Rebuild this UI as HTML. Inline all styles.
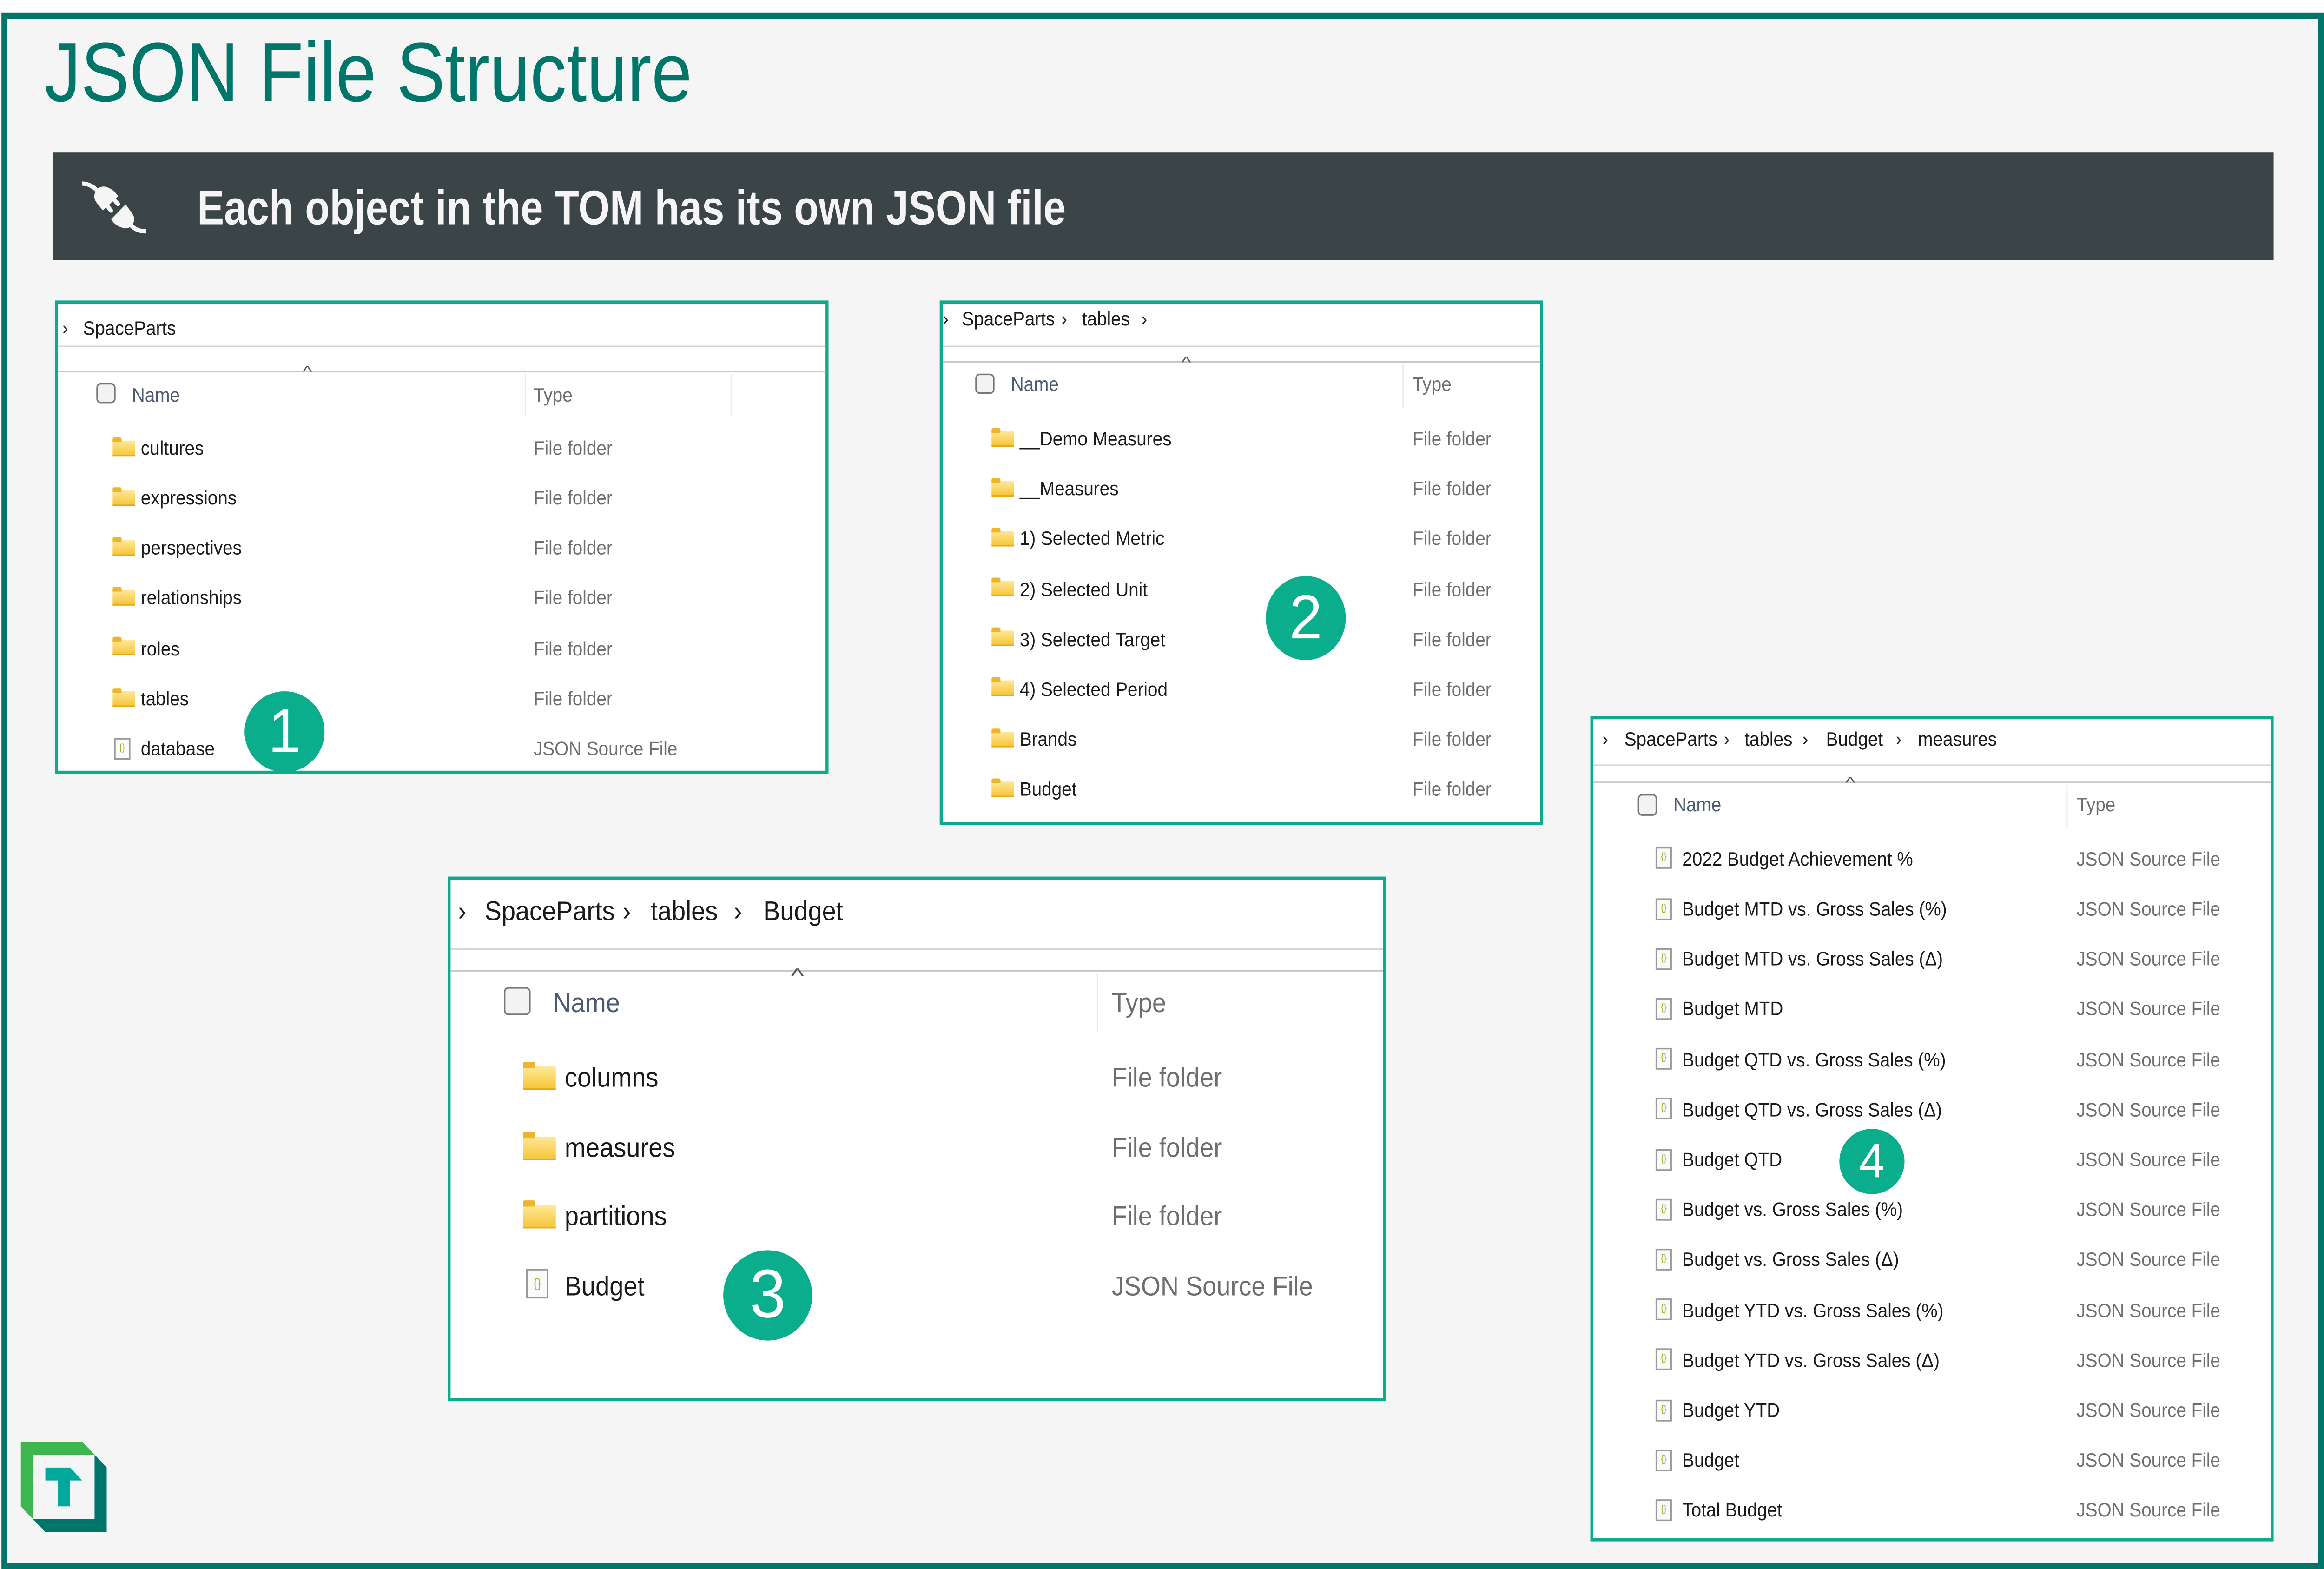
<!DOCTYPE html>
<html><head><meta charset="utf-8"><style>
*{margin:0;padding:0;box-sizing:border-box}
html,body{width:100%;height:100%;overflow:hidden;background:#fff}
#w{position:absolute;left:0;top:0;width:1568px;height:994px;transform:scale(3.34949,3.34910);transform-origin:0 0;font-family:"Liberation Sans",sans-serif}
.a{position:absolute}
.frame{left:1px;top:7.8px;width:1567px;height:1000px;border:4.2px solid #00766b;background:#f5f5f5}
.t{position:absolute;white-space:nowrap;transform-origin:0 50%;transform:scaleX(.97);color:#1a1a1a}
.s{font-size:12.5px;line-height:16px}
.b{font-size:17.5px;line-height:22px}
.g{color:#6e6e6e}
.h{color:#4b5a72}
.panel{position:absolute;background:#fff;border:2px solid #0bab8c}
.ln{position:absolute;height:1px;background:#d6d6d6}
.vl{position:absolute;width:1px;background:#ececec}
.cb{position:absolute;border:1px solid #777;border-radius:3px;background:#f3f3f3}
.fd{position:absolute;width:15px;height:10px;background:linear-gradient(#ffe89a,#f6c73a);border-bottom:1px solid #e6a91a}
.fd:before{content:"";position:absolute;left:0;top:-2.5px;width:6px;height:3px;background:#eeb52a;border-radius:1px 1px 0 0}
.fdb{position:absolute;width:22px;height:15px;background:linear-gradient(#ffe89a,#f6c73a);border-bottom:1px solid #e6a91a}
.fdb:before{content:"";position:absolute;left:0;top:-3.5px;width:8px;height:4px;background:#eeb52a;border-radius:1px 1px 0 0}
.fi{position:absolute;width:11px;height:14px;background:#fafafa;border:1px solid #9a9a9a;font-size:6px;line-height:12px;text-align:center;color:#a8b020}
.fib{position:absolute;width:15px;height:19px;background:#fafafa;border:1px solid #9a9a9a;font-size:8px;line-height:17px;text-align:center;color:#a8b020}
.bd{position:absolute;border-radius:50%;background:#0aae8d;color:#fff;text-align:center;font-family:"Liberation Sans",sans-serif}
.car{position:absolute;font-size:10px;color:#555;transform:scaleX(1.4)}
</style></head><body><div id="w">
<div class="a frame"></div>

<div class="t" style="left:30px;top:18px;font-size:54px;line-height:58px;color:#00766b;transform:scaleX(.91)">JSON File Structure</div>

<div class="a" style="left:36px;top:98px;width:1498px;height:69px;background:#3b4446"></div>
<svg class="a" style="left:47.8px;top:107.5px;width:71.6px;height:53.7px" viewBox="0 0 720 540">
<g fill="#f5f5f5" stroke="#f5f5f5">
<path d="M75,100 Q140,100 190,160" fill="none" stroke-width="28"/>
<path d="M215,272 L170,218 A62,62 0 0 1 245,125 Q290,140 318,182 Z" stroke-width="2"/>
<path d="M292,205 L318,232 M247,246 L270,274" stroke-width="28" stroke-linecap="round"/>
<path d="M370,235 L272,330 Q300,372 345,383 A58,58 0 0 0 418,300 Z" stroke-width="2"/>
<path d="M400,362 Q440,410 510,408" fill="none" stroke-width="28"/>
</g></svg>
<div class="t" style="left:133px;top:114px;font-size:31px;line-height:40px;font-weight:bold;color:#f5f5f5;transform:scaleX(.88)">Each object in the TOM has its own JSON file</div>

<!-- Panel 1 -->
<div class="panel" style="left:37px;top:193px;width:522px;height:304px"></div>
<div class="t s" style="left:42px;top:203px">›</div>
<div class="t s" style="left:56px;top:203px">SpaceParts</div>
<div class="ln" style="left:39px;top:222px;width:518px"></div>
<div class="ln" style="left:39px;top:238px;width:518px;background:#c8c8c8"></div>
<div class="car" style="left:205px;top:234px">^</div>
<div class="cb" style="left:65px;top:246px;width:13px;height:13px"></div>
<div class="t s h" style="left:89px;top:246px">Name</div>
<div class="vl" style="left:354px;top:240px;height:28px"></div>
<div class="vl" style="left:493px;top:240px;height:28px"></div>
<div class="t s g" style="left:360px;top:246px">Type</div>

<div class="fd" style="left:76px;top:283px"></div><div class="t s" style="left:95px;top:280px">cultures</div><div class="t s g" style="left:360px;top:280px">File folder</div>
<div class="fd" style="left:76px;top:315px"></div><div class="t s" style="left:95px;top:312px">expressions</div><div class="t s g" style="left:360px;top:312px">File folder</div>
<div class="fd" style="left:76px;top:347px"></div><div class="t s" style="left:95px;top:344px">perspectives</div><div class="t s g" style="left:360px;top:344px">File folder</div>
<div class="fd" style="left:76px;top:379px"></div><div class="t s" style="left:95px;top:376px">relationships</div><div class="t s g" style="left:360px;top:376px">File folder</div>
<div class="fd" style="left:76px;top:411px"></div><div class="t s" style="left:95px;top:409px">roles</div><div class="t s g" style="left:360px;top:409px">File folder</div>
<div class="fd" style="left:76px;top:444px"></div><div class="t s" style="left:95px;top:441px">tables</div><div class="t s g" style="left:360px;top:441px">File folder</div>
<div class="fi" style="left:77px;top:474px">{}</div><div class="t s" style="left:95px;top:473px">database</div><div class="t s g" style="left:360px;top:473px">JSON Source File</div>
<div class="bd" style="left:165px;top:444px;width:54px;height:52px;font-size:40px;line-height:52px">1</div>

<!-- Panel 2 -->
<div class="panel" style="left:634px;top:193px;width:407px;height:337px"></div>
<div class="t s" style="left:636px;top:197px">›</div>
<div class="t s" style="left:649px;top:197px">SpaceParts</div>
<div class="t s" style="left:716px;top:197px">›</div>
<div class="t s" style="left:730px;top:197px">tables</div>
<div class="t s" style="left:770px;top:197px">›</div>
<div class="ln" style="left:636px;top:222px;width:403px"></div>
<div class="ln" style="left:636px;top:232px;width:403px;background:#c8c8c8"></div>
<div class="car" style="left:798px;top:228px">^</div>
<div class="cb" style="left:658px;top:240px;width:13px;height:13px"></div>
<div class="t s h" style="left:682px;top:239px">Name</div>
<div class="vl" style="left:946px;top:234px;height:28px"></div>
<div class="t s g" style="left:953px;top:239px">Type</div>

<div class="fd" style="left:669px;top:277px"></div><div class="t s" style="left:688px;top:274px">__Demo Measures</div><div class="t s g" style="left:953px;top:274px">File folder</div>
<div class="fd" style="left:669px;top:309px"></div><div class="t s" style="left:688px;top:306px">__Measures</div><div class="t s g" style="left:953px;top:306px">File folder</div>
<div class="fd" style="left:669px;top:341px"></div><div class="t s" style="left:688px;top:338px">1) Selected Metric</div><div class="t s g" style="left:953px;top:338px">File folder</div>
<div class="fd" style="left:669px;top:373px"></div><div class="t s" style="left:688px;top:371px">2) Selected Unit</div><div class="t s g" style="left:953px;top:371px">File folder</div>
<div class="fd" style="left:669px;top:405px"></div><div class="t s" style="left:688px;top:403px">3) Selected Target</div><div class="t s g" style="left:953px;top:403px">File folder</div>
<div class="fd" style="left:669px;top:437px"></div><div class="t s" style="left:688px;top:435px">4) Selected Period</div><div class="t s g" style="left:953px;top:435px">File folder</div>
<div class="fd" style="left:669px;top:470px"></div><div class="t s" style="left:688px;top:467px">Brands</div><div class="t s g" style="left:953px;top:467px">File folder</div>
<div class="fd" style="left:669px;top:502px"></div><div class="t s" style="left:688px;top:499px">Budget</div><div class="t s g" style="left:953px;top:499px">File folder</div>
<div class="bd" style="left:854px;top:370px;width:54px;height:54px;font-size:40px;line-height:54px">2</div>

<!-- Panel 3 -->
<div class="panel" style="left:302px;top:563px;width:633px;height:337px"></div>
<div class="t b" style="left:309px;top:574px">›</div>
<div class="t b" style="left:327px;top:574px">SpaceParts</div>
<div class="t b" style="left:420px;top:574px">›</div>
<div class="t b" style="left:439px;top:574px">tables</div>
<div class="t b" style="left:495px;top:574px">›</div>
<div class="t b" style="left:515px;top:574px">Budget</div>
<div class="ln" style="left:304px;top:609px;width:629px"></div>
<div class="ln" style="left:304px;top:623px;width:629px;background:#c4c4c4"></div>
<div class="car" style="left:535px;top:619px;font-size:13px">^</div>
<div class="cb" style="left:340px;top:634px;width:18px;height:18px"></div>
<div class="t b h" style="left:373px;top:633px">Name</div>
<div class="vl" style="left:740px;top:625px;height:38px"></div>
<div class="t b g" style="left:750px;top:633px">Type</div>

<div class="fdb" style="left:353px;top:685px"></div><div class="t b" style="left:381px;top:681px">columns</div><div class="t b g" style="left:750px;top:681px">File folder</div>
<div class="fdb" style="left:353px;top:730px"></div><div class="t b" style="left:381px;top:726px">measures</div><div class="t b g" style="left:750px;top:726px">File folder</div>
<div class="fdb" style="left:353px;top:774px"></div><div class="t b" style="left:381px;top:770px">partitions</div><div class="t b g" style="left:750px;top:770px">File folder</div>
<div class="fib" style="left:355px;top:815px">{}</div><div class="t b" style="left:381px;top:815px">Budget</div><div class="t b g" style="left:750px;top:815px">JSON Source File</div>
<div class="bd" style="left:488px;top:803px;width:60px;height:58px;font-size:44px;line-height:58px">3</div>

<!-- Panel 4 -->
<div class="panel" style="left:1073px;top:460px;width:461px;height:530px"></div>
<div class="t s" style="left:1081px;top:467px">›</div>
<div class="t s" style="left:1096px;top:467px">SpaceParts</div>
<div class="t s" style="left:1163px;top:467px">›</div>
<div class="t s" style="left:1177px;top:467px">tables</div>
<div class="t s" style="left:1216px;top:467px">›</div>
<div class="t s" style="left:1232px;top:467px">Budget</div>
<div class="t s" style="left:1279px;top:467px">›</div>
<div class="t s" style="left:1294px;top:467px">measures</div>
<div class="ln" style="left:1075px;top:491px;width:457px"></div>
<div class="ln" style="left:1075px;top:502px;width:457px;background:#c8c8c8"></div>
<div class="car" style="left:1246px;top:498px">^</div>
<div class="cb" style="left:1105px;top:510px;width:13px;height:14px"></div>
<div class="t s h" style="left:1129px;top:509px">Name</div>
<div class="vl" style="left:1394px;top:504px;height:28px"></div>
<div class="t s g" style="left:1401px;top:509px">Type</div>

<div class="fi" style="left:1117px;top:544px">{}</div><div class="t s" style="left:1135px;top:544px">2022 Budget Achievement %</div><div class="t s g" style="left:1401px;top:544px">JSON Source File</div>
<div class="fi" style="left:1117px;top:577px">{}</div><div class="t s" style="left:1135px;top:576px">Budget MTD vs. Gross Sales (%)</div><div class="t s g" style="left:1401px;top:576px">JSON Source File</div>
<div class="fi" style="left:1117px;top:609px">{}</div><div class="t s" style="left:1135px;top:608px">Budget MTD vs. Gross Sales (Δ)</div><div class="t s g" style="left:1401px;top:608px">JSON Source File</div>
<div class="fi" style="left:1117px;top:641px">{}</div><div class="t s" style="left:1135px;top:640px">Budget MTD</div><div class="t s g" style="left:1401px;top:640px">JSON Source File</div>
<div class="fi" style="left:1117px;top:673px">{}</div><div class="t s" style="left:1135px;top:673px">Budget QTD vs. Gross Sales (%)</div><div class="t s g" style="left:1401px;top:673px">JSON Source File</div>
<div class="fi" style="left:1117px;top:705px">{}</div><div class="t s" style="left:1135px;top:705px">Budget QTD vs. Gross Sales (Δ)</div><div class="t s g" style="left:1401px;top:705px">JSON Source File</div>
<div class="fi" style="left:1117px;top:738px">{}</div><div class="t s" style="left:1135px;top:737px">Budget QTD</div><div class="t s g" style="left:1401px;top:737px">JSON Source File</div>
<div class="fi" style="left:1117px;top:770px">{}</div><div class="t s" style="left:1135px;top:769px">Budget vs. Gross Sales (%)</div><div class="t s g" style="left:1401px;top:769px">JSON Source File</div>
<div class="fi" style="left:1117px;top:802px">{}</div><div class="t s" style="left:1135px;top:801px">Budget vs. Gross Sales (Δ)</div><div class="t s g" style="left:1401px;top:801px">JSON Source File</div>
<div class="fi" style="left:1117px;top:834px">{}</div><div class="t s" style="left:1135px;top:834px">Budget YTD vs. Gross Sales (%)</div><div class="t s g" style="left:1401px;top:834px">JSON Source File</div>
<div class="fi" style="left:1117px;top:866px">{}</div><div class="t s" style="left:1135px;top:866px">Budget YTD vs. Gross Sales (Δ)</div><div class="t s g" style="left:1401px;top:866px">JSON Source File</div>
<div class="fi" style="left:1117px;top:899px">{}</div><div class="t s" style="left:1135px;top:898px">Budget YTD</div><div class="t s g" style="left:1401px;top:898px">JSON Source File</div>
<div class="fi" style="left:1117px;top:931px">{}</div><div class="t s" style="left:1135px;top:930px">Budget</div><div class="t s g" style="left:1401px;top:930px">JSON Source File</div>
<div class="fi" style="left:1117px;top:963px">{}</div><div class="t s" style="left:1135px;top:962px">Total Budget</div><div class="t s g" style="left:1401px;top:962px">JSON Source File</div>
<div class="bd" style="left:1241px;top:725px;width:44px;height:42px;font-size:31px;line-height:42px">4</div>

<!-- Logo -->
<svg class="a" style="left:14px;top:926px;width:58px;height:58px" viewBox="0 0 58 58">
<path d="M0,0 L41.5,0 L49.8,8.3 L8.3,8.3 L8.3,49.8 L0,41.5 Z" fill="#3db74d"/>
<path d="M49.8,8.3 L58,16.6 L58,58 L16.6,58 L8.3,49.8 L49.8,49.8 Z" fill="#00766b"/>
<path d="M16.6,16.6 L33.2,16.6 L41.5,24.9 L33.2,24.9 L33.2,41.5 L24.9,41.5 L24.9,24.9 L16.6,24.9 Z" fill="#00a99c"/>
</svg>
</div>
<script>
(function(){var w=document.getElementById('w');
function f(){var W=window.innerWidth||document.documentElement.clientWidth,H=window.innerHeight||document.documentElement.clientHeight;
if(W>100&&H>100){w.style.transform='scale('+(W/1568)+','+(H/994)+')';}}
f();window.addEventListener('resize',f);})();
</script>
</body></html>
